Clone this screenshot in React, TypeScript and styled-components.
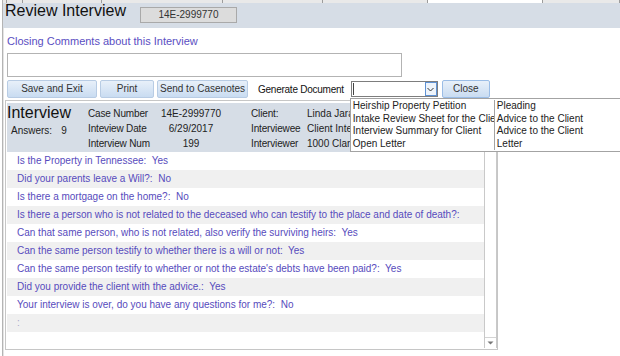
import styled, { createGlobalStyle } from 'styled-components';

const GlobalStyle = createGlobalStyle`
  html, body {
    margin: 0;
    padding: 0;
    background: #ffffff;
    overflow: hidden;
  }

  body {
    font-family: 'Liberation Sans', Arial, sans-serif;
    color: #222;
  }
`;

const TABS = [4, 16, 79, 121, 100, 105, 115, 77];
const ACTIVE_TAB = 6;

const INFO = [
  ['Case Number', '14E-2999770', 'Client:', 'Linda Jarabek'],
  ['Inteview Date', '6/29/2017', 'Interviewee', 'Client Interviewee'],
  ['Interview Num', '199', 'Interviewer', '1000 Clarendon Ave'],
];

const ANSWERS = [
  ['Is the Property in Tennessee:', 'Yes'],
  ['Did your parents leave a Will?:', 'No'],
  ['Is there a mortgage on the home?:', 'No'],
  ['Is there a person who is not related to the deceased who can testify to the place and date of death?:', ''],
  ['Can that same person, who is not related, also verify the surviving heirs:', 'Yes'],
  ['Can the same person testify to whether there is a will or not:', 'Yes'],
  ["Can the same person testify to whether or not the estate's debts have been paid?:", 'Yes'],
  ['Did you provide the client with the advice.:', 'Yes'],
  ['Your interview is over, do you have any questions for me?:', 'No'],
  [':', ''],
];

const DOCUMENTS = [
  ['Heirship Property Petition', 'Pleading'],
  ['Intake Review Sheet for the Client', 'Advice to the Client'],
  ['Interview Summary for Client', 'Advice to the Client'],
  ['Open Letter', 'Letter'],
];

const App = () => {
  return (
    <Page>
      <GlobalStyle />
      <TabStrip>
        {TABS.map((w, i) => (
          <Tab key={i} $width={w} $active={i === ACTIVE_TAB} />
        ))}
      </TabStrip>

      <HeaderBar>
        <Title>Review Interview</Title>
        <CaseBadge>14E-2999770</CaseBadge>
      </HeaderBar>

      <Content>
        <FieldLabel>Closing Comments about this Interview</FieldLabel>
        <Comments />

        <Toolbar>
          <ActionButton $width={90}>Save and Exit</ActionButton>
          <ActionButton $width={54}>Print</ActionButton>
          <ActionButton $width={91}>Send to Casenotes</ActionButton>
          <ToolLabel>Generate Document</ToolLabel>
          <SelectWrap>
            <SelectBox>
              <Caret />
              <SelectArrow>
                <svg width="7" height="5" viewBox="0 0 7 5">
                  <path d="M0.5 1 L3.5 4 L6.5 1" fill="none" stroke="#333" strokeWidth="1" />
                </svg>
              </SelectArrow>
            </SelectBox>
            <DocMenu>
              {DOCUMENTS.map(([name, kind]) => (
                <DocRow key={name}>
                  <DocName>{name}</DocName>
                  <DocKind>{kind}</DocKind>
                </DocRow>
              ))}
            </DocMenu>
          </SelectWrap>
          <ActionButton $width={48} $focused>
            Close
          </ActionButton>
        </Toolbar>

        <Panel>
          <PanelMain>
            <InfoBand>
              <Summary>
                <PanelTitle>Interview</PanelTitle>
                <AnswerCount>
                  <span>Answers:</span>
                  <span>9</span>
                </AnswerCount>
              </Summary>
              <InfoGrid>
                {INFO.map(([l1, v1, l2, v2]) => (
                  <InfoRow key={l1}>
                    <InfoLabel>{l1}</InfoLabel>
                    <InfoValue $center>{v1}</InfoValue>
                    <InfoLabel>{l2}</InfoLabel>
                    <InfoValue>{v2}</InfoValue>
                  </InfoRow>
                ))}
              </InfoGrid>
            </InfoBand>
            <AnswerList>
              {ANSWERS.map(([q, a], i) => (
                <AnswerRow key={i} $faint={q === ':'}>
                  {a ? `${q}  ${a}` : q}
                </AnswerRow>
              ))}
            </AnswerList>
          </PanelMain>
          <ScrollBar>
            <ScrollArrow>
              <svg width="7" height="4" viewBox="0 0 7 4">
                <path d="M0.5 0.5 L6.5 0.5 L3.5 3.5 Z" fill="#777" />
              </svg>
            </ScrollArrow>
          </ScrollBar>
        </Panel>
      </Content>
    </Page>
  );
};

const Page = styled.div`
  margin-left: 2px;
  height: 356px;
  border-left: 1px solid #b4b4b4;
  box-shadow: inset 1px 0 0 #e4e4e4;
`;

const TabStrip = styled.div`
  display: flex;
  height: 3px;
  background: #eeeeee;
`;

const Tab = styled.div<{ $width: number; $active?: boolean }>`
  flex: none;
  width: ${(p) => p.$width}px;
  height: 3px;
  box-sizing: border-box;
  border-right: 1px solid #9c9c9c;
  background: ${(p) => (p.$active ? '#ffffff' : '#e9e9e9')};
`;

const HeaderBar = styled.div`
  display: flex;
  align-items: flex-start;
  height: 25px;
  padding-left: 2px;
  background: #d6dde6;
`;

const Title = styled.div`
  font-size: 16px;
  line-height: 16px;
  color: #111;
`;

const CaseBadge = styled.div`
  margin: 4px 0 0 14px;
  width: 97px;
  height: 16px;
  box-sizing: border-box;
  border: 1px solid #a9a9a9;
  background: #dcdcdc;
  font-size: 10px;
  line-height: 14px;
  text-align: center;
  color: #333;
`;

const Content = styled.div`
  display: flex;
  flex-direction: column;
  align-items: flex-start;
  padding-left: 4px;
`;

const FieldLabel = styled.div`
  margin-top: 7px;
  font-size: 11px;
  line-height: 13px;
  color: #5a4ec2;
`;

const Comments = styled.div`
  margin-top: 5px;
  width: 395px;
  height: 24px;
  box-sizing: border-box;
  border: 1px solid #b3b3b3;
  background: #fff;
`;

const Toolbar = styled.div`
  display: flex;
  align-items: center;
  margin-top: 3px;
  height: 18px;
`;

const ActionButton = styled.div<{ $width: number; $focused?: boolean }>`
  flex: none;
  width: ${(p) => p.$width}px;
  height: 18px;
  margin-right: 3px;
  box-sizing: border-box;
  border: 1px solid ${(p) => (p.$focused ? '#9bbde6' : '#b8cce4')};
  border-radius: 2px;
  background: linear-gradient(#e8f0f9, #c9dcf1);
  font-size: 10px;
  line-height: 16px;
  text-align: center;
  color: #333;
`;

const ToolLabel = styled.div`
  margin: 0 7px 0 7px;
  font-size: 10px;
  letter-spacing: -0.25px;
  color: #111;
`;

const SelectWrap = styled.div`
  position: relative;
  margin-right: 4px;
`;

const SelectBox = styled.div`
  display: flex;
  justify-content: space-between;
  align-items: stretch;
  width: 87px;
  height: 16px;
  box-sizing: border-box;
  border: 1px solid #7d7d7d;
  background: #fff;
`;

const Caret = styled.div`
  width: 1px;
  margin: 1px 0 1px 1px;
  background: #444;
`;

const SelectArrow = styled.div`
  display: flex;
  align-items: center;
  justify-content: center;
  width: 12px;
  box-sizing: border-box;
  border: 1px solid #5f92d4;
  background: #eef4fb;
`;

const DocMenu = styled.div`
  position: absolute;
  top: 17px;
  left: -1px;
  width: 270px;
  box-sizing: border-box;
  padding: 1px 0;
  border: 1px solid #a3a3a3;
  border-right: none;
  background: #fff;
  z-index: 5;
`;

const DocRow = styled.div`
  display: grid;
  grid-template-columns: 144px 1fr;
  height: 12.5px;
  font-size: 10px;
  line-height: 12.5px;
  color: #222;
`;

const DocName = styled.div`
  padding-left: 2px;
  overflow: hidden;
  white-space: nowrap;
  border-right: 1px solid #a3a3a3;
`;

const DocKind = styled.div`
  padding-left: 2px;
  white-space: nowrap;
  overflow: hidden;
`;

const Panel = styled.div`
  display: flex;
  margin: 2px 0 0 -2px;
  width: 493px;
  height: 250px;
  box-sizing: border-box;
  padding: 2px 0 1px 1px;
  border: 1px solid #c6c6c6;
  background: #fff;
`;

const PanelMain = styled.div`
  flex: 1;
  display: flex;
  flex-direction: column;
`;

const InfoBand = styled.div`
  display: flex;
  height: 49px;
  background: #d6dde6;
`;

const Summary = styled.div`
  width: 81px;
  padding-top: 2px;
`;

const PanelTitle = styled.div`
  font-size: 16px;
  line-height: 16px;
  color: #111;
`;

const AnswerCount = styled.div`
  display: flex;
  gap: 9px;
  margin-top: 4px;
  padding-left: 4px;
  font-size: 10px;
  line-height: 12px;
  color: #222;
`;

const InfoGrid = styled.div`
  padding-top: 3px;
`;

const InfoRow = styled.div`
  display: grid;
  grid-template-columns: 72px 62px 29px 56px 43px;
  height: 15px;
  font-size: 10px;
  line-height: 15px;
  color: #222;

  & > :nth-child(3) {
    grid-column: 4;
  }
`;

const InfoLabel = styled.div`
  white-space: nowrap;
  letter-spacing: -0.15px;
`;

const InfoValue = styled.div<{ $center?: boolean }>`
  white-space: nowrap;
  overflow: hidden;
  text-align: ${(p) => (p.$center ? 'center' : 'left')};
`;

const AnswerList = styled.div`
  flex: 1;
`;

const AnswerRow = styled.div<{ $faint?: boolean }>`
  height: 18px;
  padding-left: 10px;
  font-size: 10px;
  line-height: 18px;
  white-space: pre;
  color: ${(p) => (p.$faint ? '#a9a6c8' : '#574bbd')};

  &:nth-child(even) {
    background: #f0f0f0;
  }
`;

const ScrollBar = styled.div`
  display: flex;
  flex-direction: column;
  justify-content: flex-end;
  width: 13px;
  box-sizing: border-box;
  border-left: 1px solid #c9c9c9;
  border-right: 1px solid #c9c9c9;
  background: #fff;
`;

const ScrollArrow = styled.div`
  display: flex;
  align-items: center;
  justify-content: center;
  height: 10px;
  border-top: 1px solid #d4d4d4;
`;

export default App;
